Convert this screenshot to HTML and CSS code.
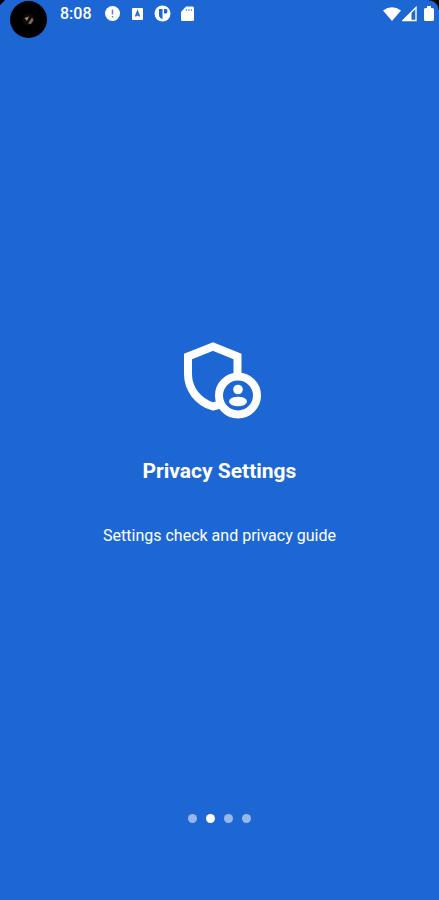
FILE: index.html
```html
<!DOCTYPE html>
<html lang="en">
<head>
    <meta charset="UTF-8">
    <meta name="viewport" content="width=device-width, initial-scale=1.0">
    <title>Privacy Settings</title>
    <link rel="stylesheet" href="styles.css">
</head>
<body>
    <div class="screen">
        <header class="status-bar">
            <div class="camera">
                <svg width="37" height="37" viewBox="0 0 37 37" aria-hidden="true">
                    <circle cx="18.500" cy="18.500" r="18.500" fill="#000"/>
                    <circle cx="18.500" cy="18.500" r="6" fill="#0d0b0b"/>
                    <path d="M14.500 17l4.500-1.500-2 4.500z" fill="#a58a80"/>
                    <path d="M18 22.500l4-6 1.500 2.500-2.500 4z" fill="#8a675b"/>
                </svg>
            </div>
            <span class="time">8:08</span>
            <div class="notifications">
                <!-- Alert -->
                <svg width="17" height="17" viewBox="0 0 17 17" aria-hidden="true">
                    <circle cx="8.500" cy="8.500" r="7.500" fill="#fff"/>
                    <path d="M8.500 4.500v5M8.500 11v1.500" stroke="#5287df" stroke-width="1.500"/>
                </svg>
                <!-- Keyboard -->
                <svg width="17" height="17" viewBox="0 0 17 17" aria-hidden="true">
                    <rect x="3" y="3" width="11" height="12" rx="1" fill="#fff"/>
                    <path d="M6.500 11.500l2-5 2 5M7 10h3" stroke="#2466ce" stroke-width="1.400" fill="none"/>
                </svg>
                <!-- App -->
                <svg width="17" height="17" viewBox="0 0 17 17" aria-hidden="true">
                    <circle cx="8.500" cy="8.500" r="8" fill="#fff"/>
                    <path d="M5 4h3.500v10q-3.500-1-3.500-4zM10 4h2q1.500 0 1.500 2t-1.500 2.500h-2z" fill="#1d67d5"/>
                </svg>
                <!-- SD card -->
                <svg width="17" height="17" viewBox="0 0 17 17" aria-hidden="true">
                    <path d="M7 1.500h6.500q1.500 0 1.500 1.500v11.500q0 1.500-1.500 1.500h-10q-1.500 0-1.500-1.500v-7.500z" fill="#fff"/>
                    <path d="M7.500 4v2M10 4v2M12.500 4v2" stroke="#6f9be4" stroke-width="1.200"/>
                </svg>
            </div>
            <div class="system">
                <!-- Wifi, signal, battery -->
                <svg width="18" height="16" viewBox="0 0 18 16" aria-hidden="true">
                    <path d="M0 4.500Q9-2 18 4.500L9 15z" fill="#fff"/>
                </svg>
                <svg width="15" height="16" viewBox="0 0 15 16" aria-hidden="true">
                    <path d="M14 1.500v13h-13z" fill="none" stroke="#fff" stroke-width="1.400"/>
                    <path d="M1 14.500L9.500 6v8.500z" fill="#fff"/>
                </svg>
                <svg class="battery" width="10" height="16" viewBox="0 0 10 16" aria-hidden="true">
                    <path d="M3 0h4v2h1.500q1.500 0 1.500 1.500v10q0 1.500-1.500 1.500h-7q-1.500 0-1.500-1.500v-10q0-1.500 1.500-1.500h1.500z" fill="#fff"/>
                </svg>
            </div>
        </header>

        <main class="intro">
            <svg class="intro-icon" width="83" height="80" viewBox="0 0 83 80" aria-hidden="true">
                <path d="M10 16.500L35 6.500L59.500 16.500V34C59.500 52 49 64 35 66.500C20 62 10 49 10 34Z" fill="none" stroke="#fff" stroke-width="8"/>
                <circle cx="60" cy="55.500" r="19" fill="#1d67d5" stroke="#fff" stroke-width="8"/>
                <circle cx="60" cy="49.500" r="4.800" fill="#fff"/>
                <ellipse cx="60" cy="61.500" rx="9" ry="4.800" fill="#fff"/>
            </svg>
            <h1>Privacy Settings</h1>
            <p>Settings check and privacy guide</p>
        </main>

        <nav class="dots" aria-label="Pages">
            <button class="dot" type="button" aria-label="Page 1"></button>
            <button class="dot active" type="button" aria-label="Page 2" aria-current="true"></button>
            <button class="dot" type="button" aria-label="Page 3"></button>
            <button class="dot" type="button" aria-label="Page 4"></button>
        </nav>
    </div>
</body>
</html>
```
FILE: styles.css
```css
/* General Page Styling */
body {
    margin: 0;
    font-family: Roboto, sans-serif;
    background-color: #1d67d5;
    color: #fff;
}

svg {
    display: block;
}

.screen {
    position: relative;
    display: flex;
    flex-direction: column;
    min-height: 100vh;
}

/* Rounded display corners */
.screen::before,
.screen::after {
    content: "";
    position: absolute;
    top: 0;
    width: 10px;
    height: 10px;
}

.screen::before {
    left: 0;
    width: 5px;
    height: 5px;
    background: linear-gradient(135deg, #000 45%, transparent 60%);
}

.screen::after {
    right: 0;
    background: radial-gradient(circle at 0 100%, transparent 9px, #000 10px);
}

/* Status Bar */
.status-bar {
    display: flex;
    align-items: flex-start;
    padding: 0 5px 0 10px;
}

.camera {
    margin: 1px 13px 0 0;
}

.time,
.notifications,
.system {
    display: flex;
    align-items: center;
    height: 27px;
}

.time {
    font-size: 16px;
    font-weight: 500;
}

.notifications {
    gap: 8px;
    margin-left: 12px;
}

.system {
    gap: 1px;
    margin-left: auto;
}

.battery {
    margin-left: 6px;
}

/* Intro Page */
.intro {
    flex: 1;
    display: flex;
    flex-direction: column;
    align-items: center;
    justify-content: center;
    padding-top: 36px;
    text-align: center;
}

h1 {
    margin: 39px 0 41px;
    font-size: 21px;
    line-height: 24px;
    font-weight: 700;
}

p {
    margin: 0;
    font-size: 16px;
    line-height: 24px;
}

/* Page Dots */
.dots {
    display: flex;
    justify-content: center;
    gap: 9px;
    padding-bottom: 77px;
}

.dot {
    width: 9px;
    height: 9px;
    padding: 0;
    border: none;
    border-radius: 50%;
    background-color: #97b8ee;
    cursor: pointer;
}

.dot.active {
    background-color: #fff;
}
```
